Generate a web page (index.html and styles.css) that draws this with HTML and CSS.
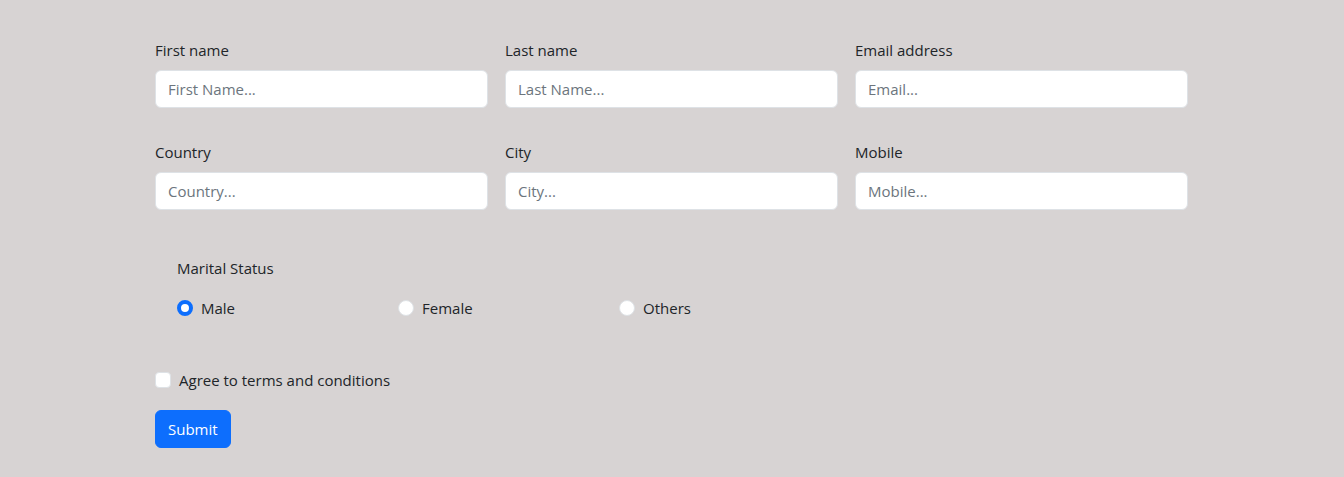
FILE: index.html
```html
<!DOCTYPE html>
<html lang="en">
<head>
<meta charset="utf-8">
<title>Form</title>
<link rel="stylesheet" href="styles.css">
</head>
<body>
<form class="form">
  <div class="grid">
    <div class="field">
      <label class="label" for="fn">First name</label>
      <input class="input" id="fn" type="text" placeholder="First Name...">
    </div>
    <div class="field">
      <label class="label" for="ln">Last name</label>
      <input class="input" id="ln" type="text" placeholder="Last Name...">
    </div>
    <div class="field">
      <label class="label" for="em">Email address</label>
      <input class="input" id="em" type="email" placeholder="Email...">
    </div>
    <div class="field">
      <label class="label" for="co">Country</label>
      <input class="input" id="co" type="text" placeholder="Country...">
    </div>
    <div class="field">
      <label class="label" for="ci">City</label>
      <input class="input" id="ci" type="text" placeholder="City...">
    </div>
    <div class="field">
      <label class="label" for="mo">Mobile</label>
      <input class="input" id="mo" type="text" placeholder="Mobile...">
    </div>
  </div>

  <fieldset class="marital">
    <div class="marital-title">Marital Status</div>
    <div class="radios">
      <label class="radio-item"><span class="radio checked"></span>Male</label>
      <label class="radio-item"><span class="radio"></span>Female</label>
      <label class="radio-item"><span class="radio"></span>Others</label>
    </div>
  </fieldset>

  <label class="check-item"><span class="checkbox"></span>Agree to terms and conditions</label>

  <button class="btn" type="button">Submit</button>
</form>
</body>
</html>
```
FILE: styles.css
```css
html, body {
  margin: 0;
  padding: 0;
}
body {
  background: #d7d3d3;
  font-family: "Open Sans", "Noto Sans", sans-serif;
  font-size: 15px;
  color: #212529;
  height: 477px;
  overflow: hidden;
}
.form {
  width: 1033px;
  margin-left: 155px;
  padding-top: 38px;
}
.grid {
  display: grid;
  grid-template-columns: 333px 333px 333px;
  column-gap: 17px;
  row-gap: 32px;
}
.field {
  display: flex;
  flex-direction: column;
}
.label {
  line-height: 24px;
  margin-bottom: 8px;
}
.input {
  box-sizing: border-box;
  height: 38px;
  border: 1px solid #dee2e6;
  border-radius: 6px;
  background: #fff;
  padding: 6px 12px;
  font-family: inherit;
  font-size: 15px;
  color: #212529;
  outline: none;
}
.input::placeholder {
  color: #6c757d;
}
.marital {
  border: 0;
  margin: 46px 0 0 0;
  padding: 0 0 0 22px;
}
.marital-title {
  line-height: 24px;
}
.radios {
  display: grid;
  grid-template-columns: 221px 221px 221px;
  margin-top: 16px;
}
.radio-item, .check-item {
  display: flex;
  align-items: center;
  line-height: 24px;
}
.radio {
  box-sizing: border-box;
  width: 16px;
  height: 16px;
  border-radius: 50%;
  border: 1px solid #dee2e6;
  background: #fff;
  margin-right: 8px;
}
.radio.checked {
  border: 4px solid #0d6efd;
  background: #fff;
}
.check-item {
  margin-top: 48px;
}
.checkbox {
  box-sizing: border-box;
  width: 16px;
  height: 16px;
  border-radius: 4px;
  border: 1px solid #dee2e6;
  background: #fff;
  margin-right: 8px;
}
.btn {
  display: block;
  margin-top: 18px;
  height: 38px;
  padding: 0 12px;
  border: 1px solid #0d6efd;
  border-radius: 6px;
  background: #0d6efd;
  color: #fff;
  font-family: inherit;
  font-size: 15px;
}
```
